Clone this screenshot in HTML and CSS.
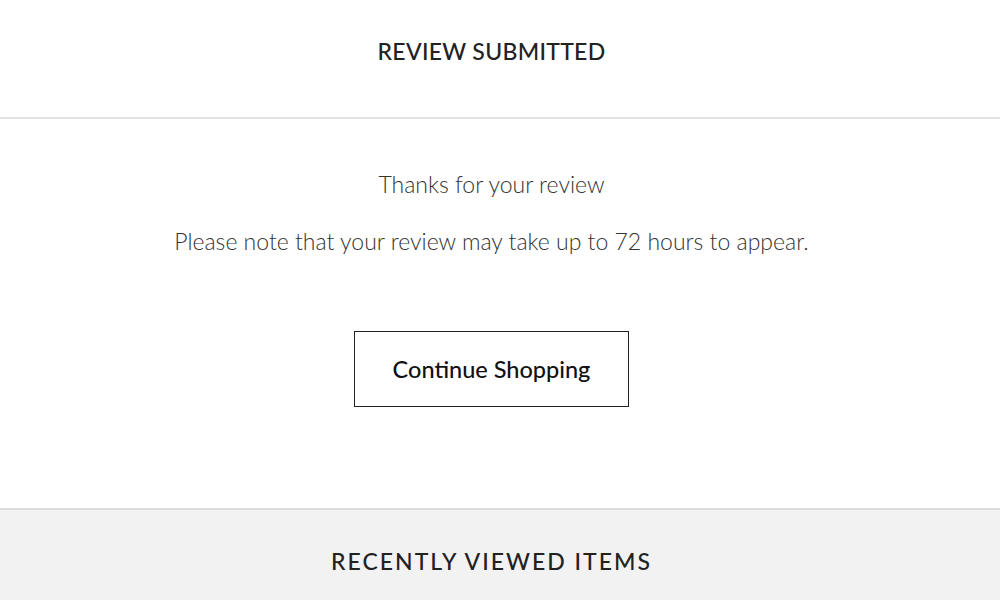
FILE: index.html
```html
<!DOCTYPE html>
<html>
<head>
    <meta charset="UTF-8" />
    <title>Review submitted</title>
    <meta name="viewport" content="width=device-width, initial-scale=1">
    <link rel="stylesheet" href="styles.css">
</head>
<body>

<header class="page-title">
  <h1>REVIEW SUBMITTED</h1>
</header>

<section class="confirm">
  <p class="thanks">Thanks for your review</p>
  <p class="note">Please note that your review may take up to 72 hours to appear.</p>
  <a class="button" href="#">Continue Shopping</a>
</section>

<section class="recent">
  <h2>RECENTLY VIEWED ITEMS</h2>
</section>

</body>
</html>
```

FILE: styles.css
```css
* {
  box-sizing: border-box;
}

body {
  margin: 0;
  font-family: Lato, "Open Sans", Arial, sans-serif;
  color: #222;
  background: #fff;
}

/* Title bar */
.page-title {
  height: 119px;
  border-bottom: 2px solid #e2e2e2;
  display: flex;
  align-items: center;
  justify-content: center;
  padding-right: 17px;
}

.page-title h1 {
  margin: 0 0 16px 0;
  font-size: 23px;
  font-weight: 500;
  letter-spacing: 0.3px;
}

/* Message + button */
.confirm {
  height: 389px;
  display: flex;
  flex-direction: column;
  align-items: center;
  padding: 50px 17px 0 0;
}

.confirm p {
  margin: 0;
  font-weight: 300;
  font-size: 23px;
  line-height: 30px;
  color: #333;
}

.thanks {
  margin-bottom: 27px !important;
}

.button {
  margin-top: 75px;
  width: 275px;
  height: 76px;
  border: 1px solid #222;
  display: flex;
  align-items: center;
  justify-content: center;
  color: #111;
  text-decoration: none;
  font-size: 23.5px;
  font-weight: 500;
}

/* Recently viewed */
.recent {
  height: 92px;
  background: #f2f2f2;
  border-top: 2px solid #dcdcdc;
  display: flex;
  justify-content: center;
  padding: 37px 17px 0 0;
}

.recent h2 {
  margin: 0;
  font-size: 23px;
  font-weight: 500;
  letter-spacing: 2px;
}
```
